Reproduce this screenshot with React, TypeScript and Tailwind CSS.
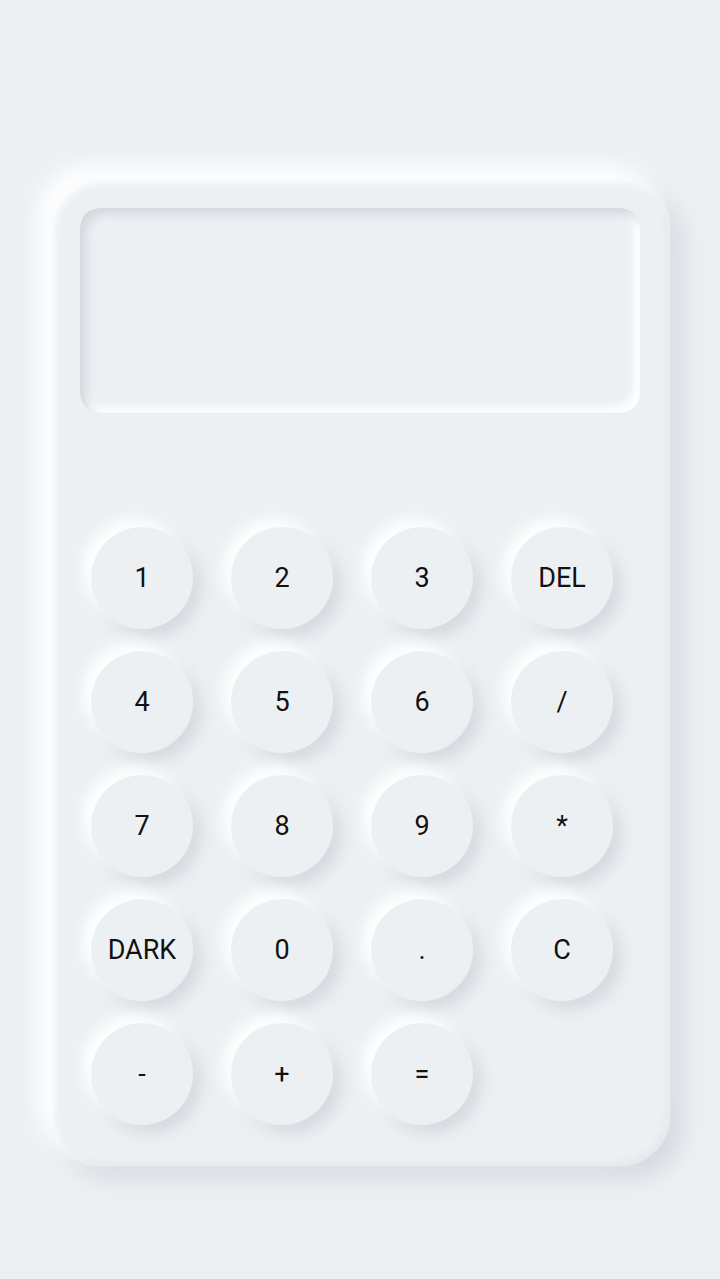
const keys = ['1', '2', '3', 'DEL', '4', '5', '6', '/', '7', '8', '9', '*', 'DARK', '0', '.', 'C', '-', '+', '='];

export default function App() {
  return (
    <div className="min-h-[1279px] bg-[#ecf0f3] pt-[178px] font-['Roboto','Liberation_Sans',sans-serif]">
      {/* calculator body */}
      <div className="mx-auto w-[620px] h-[988px] rounded-[50px] bg-[#ecf0f3] px-[30px] pt-[30px] shadow-[-12px_-12px_24px_#ffffff,12px_12px_24px_#d3d9e0,inset_4px_4px_8px_#ffffff,inset_-3px_-3px_8px_#e1e6eb]">
        {/* display */}
        <div className="h-[205px] rounded-[20px] bg-[#ecf0f3] shadow-[inset_6px_6px_10px_#d3d8de,inset_-6px_-6px_10px_#ffffff]"></div>

        {/* keypad */}
        <div className="mt-[114px] grid grid-cols-[repeat(4,102px)] gap-x-[38px] gap-y-[22px] pl-[11px]">
          {keys.map((k) => (
            <button
              key={k}
              className="w-[102px] h-[102px] rounded-full bg-[#edf0f3] text-[27px] text-[#111] flex items-center justify-center shadow-[-8px_-8px_16px_#ffffff,8px_8px_16px_#d3d9df]"
            >
              {k}
            </button>
          ))}
        </div>
      </div>
    </div>
  );
}
